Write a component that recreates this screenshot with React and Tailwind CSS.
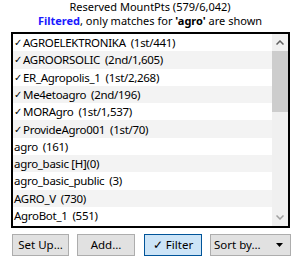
import React from 'react';

const rows = [
  { check: true, name: 'AGROELEKTRONIKA', info: '(1st/441)' },
  { check: true, name: 'AGROORSOLIC', info: '(2nd/1,605)' },
  { check: true, name: 'ER_Agropolis_1', info: '(1st/2,268)' },
  { check: true, name: 'Me4etoagro', info: '(2nd/196)' },
  { check: true, name: 'MORAgro', info: '(1st/1,537)' },
  { check: true, name: 'ProvideAgro001', info: '(1st/70)' },
  { check: false, name: 'agro', info: '(161)' },
  { check: false, name: 'agro_basic [H]', info: '(0)', tight: true },
  { check: false, name: 'agro_basic_public', info: '(3)' },
  { check: false, name: 'AGRO_V', info: '(730)' },
  { check: false, name: 'AgroBot_1', info: '(551)' },
];

const font = { fontFamily: '"Noto Sans", "Liberation Sans", sans-serif' };

const App = () => {
  return (
    <div className="w-[300px] h-[260px] bg-white text-black overflow-hidden" style={font}>
      <div className="text-center text-[11px] leading-[14px] pt-0">
        <div>Reserved MountPts (579/6,042)</div>
        <div>
          <span className="font-bold text-[#1a1aff]">Filtered</span>, only matches for{' '}
          <b>'agro'</b> are shown
        </div>
      </div>

      <div className="mt-[4px] ml-[11px] w-[279px] h-[196px] border-2 border-black flex">
        <div className="flex-1 flex flex-col overflow-hidden">
          {rows.map((r, i) => (
            <div
              key={r.name}
              className={`h-[17.3px] shrink-0 flex items-center pl-[1px] text-[11.5px] tracking-[-0.3px] whitespace-nowrap ${i % 2 ? 'bg-[#f3f3f3]' : 'bg-white'}`}
            >
              {r.check && <span className="w-[9px] text-[10px] tracking-normal">✓</span>}
              <span>{r.name}</span>
              <span className={r.tight ? '' : 'ml-[5px]'}>{r.info}</span>
            </div>
          ))}
        </div>
        <div className="w-[16px] bg-[#f0f0f0] flex flex-col">
          <div className="h-[17px] flex items-center justify-center">
            <svg width="8" height="5" viewBox="0 0 8 5"><path d="M0.5 4.5 L4 1 L7.5 4.5" stroke="#606060" strokeWidth="1.5" fill="none" /></svg>
          </div>
          <div className="h-[61px] bg-[#cdcdcd]" />
          <div className="flex-1" />
          <div className="h-[17px] flex items-center justify-center">
            <svg width="8" height="5" viewBox="0 0 8 5"><path d="M0.5 0.5 L4 4 L7.5 0.5" stroke="#a0a0a0" strokeWidth="1.5" fill="none" /></svg>
          </div>
        </div>
      </div>

      <div className="mt-[6px] ml-[12px] flex items-center gap-[8px] text-[11.5px]">
        <button className="w-[57px] h-[22px] bg-[#e1e1e1] border border-[#adadad]">Set Up…</button>
        <button className="w-[58px] h-[22px] bg-[#e1e1e1] border border-[#adadad]">Add…</button>
        <button className="w-[58px] h-[22px] bg-[#cce4f7] border border-[#005499] ml-[1px]">✓ Filter</button>
        <div className="w-[81px] h-[22px] bg-[#e1e1e1] border border-[#adadad] flex items-center pl-[3px] pr-[7px] justify-between">
          <span>Sort by…</span>
          <svg width="7" height="4" viewBox="0 0 7 4"><path d="M0 0 H7 L3.5 4 Z" fill="#000" /></svg>
        </div>
      </div>
    </div>
  );
};

export default App;
